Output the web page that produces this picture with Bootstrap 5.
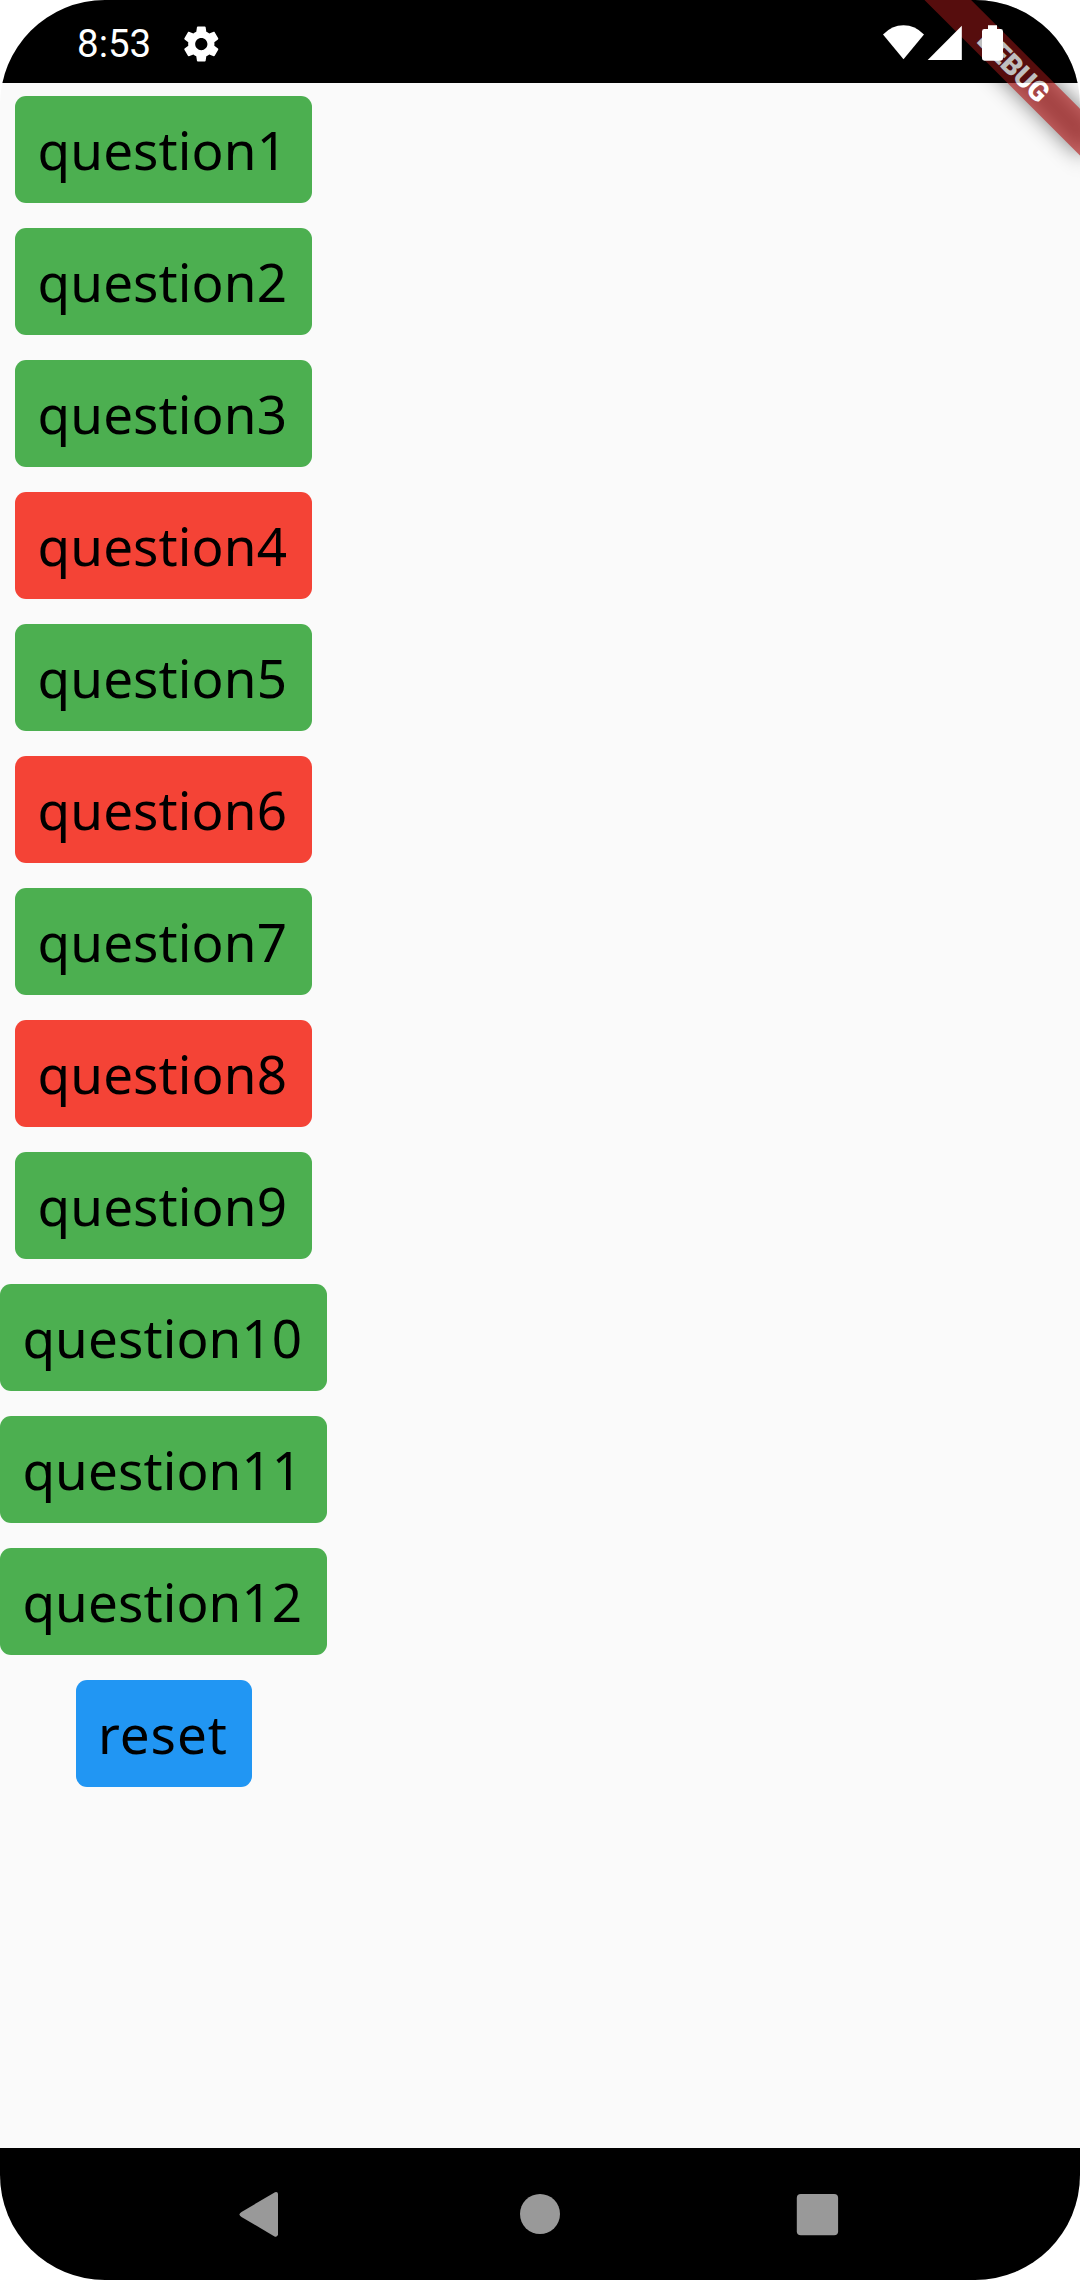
<!DOCTYPE html>
<html lang="en">
<head>
<meta charset="utf-8">
<meta name="viewport" content="width=device-width, initial-scale=1">
<title>Questions</title>
<link href="https://cdn.jsdelivr.net/npm/bootstrap@5.3.0/dist/css/bootstrap.min.css" rel="stylesheet">
<style>
  body { background: #fff; }
  .phone { width: 1080px; height: 2280px; border-radius: 105px; background: #fafafa; }
  .status-bar { height: 83px; padding: 0 77px; background: #000; }
  .status-bar .clock { font: 400 38.5px/45px Roboto, sans-serif; color: #fff; width: 74px; margin-top: 4px; }
  .status-icons { z-index: 3; }
  .debug-ribbon { z-index: 2; width: 240px; height: 240px; pointer-events: none; }
  .quiz { padding-top: 12.5px; gap: 25px; width: 327.4px; }
  .quiz .btn {
    --bs-btn-color: #000; --bs-btn-hover-color: #000; --bs-btn-border-width: 0;
    --bs-btn-padding-x: 0; --bs-btn-padding-y: 0; --bs-btn-border-radius: 11px;
    height: 107px; width: 297px; padding: 1.5px 0 0 22.4px; text-align: left;
    font: 400 53px/105px "Noto Sans", sans-serif; letter-spacing: .1px; white-space: nowrap;
  }
  .quiz .btn-wide { width: 327.4px; }
  .quiz .btn-reset { width: 176px; letter-spacing: .9px; }
  .btn-right { --bs-btn-bg: #4caf50; --bs-btn-hover-bg: #43a047; }
  .btn-wrong { --bs-btn-bg: #f44336; --bs-btn-hover-bg: #e53935; }
  .btn-reset { --bs-btn-bg: #2196f3; --bs-btn-hover-bg: #1e88e5; }
  .nav-keys { height: 132px; background: #000; }
  .nav-keys .keys-row { width: 832.5px; }
  .nav-keys svg { fill: #999; }
</style>
</head>
<body>
<div class="phone position-relative overflow-hidden d-flex flex-column">
  <header class="status-bar d-flex align-items-center flex-shrink-0">
    <span class="clock">8:53</span>
    <svg class="ms-4" width="42" height="42" viewBox="0 0 24 24" transform="translate(5.3 2)" fill="#fff"><path d="M19.43 12.98c.04-.32.07-.64.07-.98s-.03-.66-.07-.98l2.11-1.65c.19-.15.24-.42.12-.64l-2-3.46c-.12-.22-.39-.3-.61-.22l-2.49 1c-.52-.4-1.08-.73-1.69-.98l-.38-2.65C14.46 2.18 14.25 2 14 2h-4c-.25 0-.46.18-.49.42l-.38 2.65c-.61.25-1.17.59-1.69.98l-2.49-1c-.23-.09-.49 0-.61.22l-2 3.46c-.13.22-.07.49.12.64l2.11 1.65c-.04.32-.07.65-.07.98s.03.66.07.98l-2.11 1.65c-.19.15-.24.42-.12.64l2 3.46c.12.22.39.3.61.22l2.49-1c.52.4 1.08.73 1.69.98l.38 2.65c.03.24.24.42.49.42h4c.25 0 .46-.18.49-.42l.38-2.65c.61-.25 1.17-.59 1.69-.98l2.49 1c.23.09.49 0 .61-.22l2-3.46c.12-.22.07-.49-.12-.64l-2.11-1.65zM12 15.5c-1.93 0-3.5-1.57-3.5-3.5s1.57-3.5 3.5-3.5 3.5 1.57 3.5 3.5-1.57 3.5-3.5 3.5z"/></svg>
    <svg class="status-icons position-relative ms-auto" width="120" height="83" viewBox="883 0 120 83" fill="#fff">
      <path d="M903.5 59.3L883 34.4Q892 25.2 903.5 25.2T924 34.4Z"/>
      <path d="M927.7 60L961.8 25.8V60Z"/>
      <path d="M988 25.3h9v3.700h3.600q2.400 0 2.400 2.400v26.900q0 2.400-2.400 2.400h-16.200q-2.400 0-2.400-2.400v-26.900q0-2.400 2.400-2.400h3.600z"/>
    </svg>
  </header>

  <main class="flex-grow-1">
    <div class="quiz d-flex flex-column align-items-center">
      <button class="btn btn-right">question1</button>
      <button class="btn btn-right">question2</button>
      <button class="btn btn-right">question3</button>
      <button class="btn btn-wrong">question4</button>
      <button class="btn btn-right">question5</button>
      <button class="btn btn-wrong">question6</button>
      <button class="btn btn-right">question7</button>
      <button class="btn btn-wrong">question8</button>
      <button class="btn btn-right">question9</button>
      <button class="btn btn-right btn-wide">question10</button>
      <button class="btn btn-right btn-wide">question11</button>
      <button class="btn btn-right btn-wide">question12</button>
      <button class="btn btn-reset">reset</button>
    </div>
  </main>

  <footer class="nav-keys d-flex justify-content-center align-items-center flex-shrink-0">
    <div class="keys-row row g-0 text-center">
      <div class="col"><svg width="60" height="60"><path d="M8.500 28L42 8.200Q45 7.500 45 10V50.600Q44.500 53.500 41.500 52.400L8.500 33Q4.500 30.500 8.500 28Z"/></svg></div>
      <div class="col"><svg width="60" height="60"><circle cx="30" cy="30" r="20"/></svg></div>
      <div class="col"><svg width="60" height="60"><rect x="8.800" y="10" width="41.300" height="41.300" rx="4"/></svg></div>
    </div>
  </footer>

  <svg class="debug-ribbon position-absolute top-0 end-0" viewBox="840 0 240 240">
    <defs><filter id="soft" x="-20%" y="-200%" width="140%" height="500%"><feGaussianBlur stdDeviation="10.900"/></filter></defs>
    <g transform="translate(1013.9 66.100) rotate(45)">
      <rect x="-110" y="-16.500" width="220" height="33" fill="#000" fill-opacity=".5" filter="url(#soft)"/>
      <rect x="-110" y="-16.500" width="220" height="33" fill="#b71c1c" fill-opacity=".627"/>
      <text x="0" y="10" text-anchor="middle" font-family="Roboto, sans-serif" font-weight="900" font-size="28.050" textLength="88" fill="#fff">DEBUG</text>
    </g>
    <rect x="840" y="0" width="240" height="83" fill="#000" fill-opacity=".25"/>
  </svg>
</div>
<script src="https://cdn.jsdelivr.net/npm/bootstrap@5.3.0/dist/js/bootstrap.bundle.min.js"></script>
</body>
</html>
